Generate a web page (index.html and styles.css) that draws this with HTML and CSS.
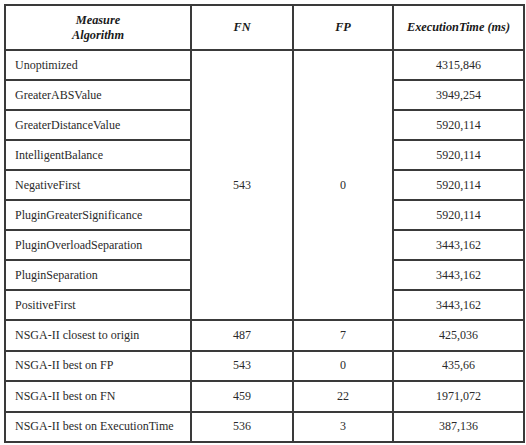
FILE: index.html
```html
<!DOCTYPE html>
<html lang="en">

<head>
    <meta charset="UTF-8">
    <meta name="viewport" content="width=device-width, initial-scale=1.0">
    <title>Results</title>
    <link rel="stylesheet" href="styles.css">
</head>

<body>
    <table class="results">
        <colgroup>
            <col class="col-algo">
            <col class="col-fn">
            <col class="col-fp">
            <col class="col-time">
        </colgroup>
        <thead>
            <tr>
                <th>Measure<br>Algorithm</th>
                <th>FN</th>
                <th>FP</th>
                <th>ExecutionTime (ms)</th>
            </tr>
        </thead>
        <tbody>
            <tr>
                <td class="name">Unoptimized</td>
                <td rowspan="9">543</td>
                <td rowspan="9">0</td>
                <td>4315,846</td>
            </tr>
            <tr>
                <td class="name">GreaterABSValue</td>
                <td>3949,254</td>
            </tr>
            <tr>
                <td class="name">GreaterDistanceValue</td>
                <td>5920,114</td>
            </tr>
            <tr>
                <td class="name">IntelligentBalance</td>
                <td>5920,114</td>
            </tr>
            <tr>
                <td class="name">NegativeFirst</td>
                <td>5920,114</td>
            </tr>
            <tr>
                <td class="name">PluginGreaterSignificance</td>
                <td>5920,114</td>
            </tr>
            <tr>
                <td class="name">PluginOverloadSeparation</td>
                <td>3443,162</td>
            </tr>
            <tr>
                <td class="name">PluginSeparation</td>
                <td>3443,162</td>
            </tr>
            <tr>
                <td class="name">PositiveFirst</td>
                <td>3443,162</td>
            </tr>
            <tr class="nsga">
                <td class="name">NSGA-II closest to origin</td>
                <td>487</td>
                <td>7</td>
                <td>425,036</td>
            </tr>
            <tr class="nsga">
                <td class="name">NSGA-II best on FP</td>
                <td>543</td>
                <td>0</td>
                <td>435,66</td>
            </tr>
            <tr class="nsga">
                <td class="name">NSGA-II best on FN</td>
                <td>459</td>
                <td>22</td>
                <td>1971,072</td>
            </tr>
            <tr class="nsga">
                <td class="name">NSGA-II best on ExecutionTime</td>
                <td>536</td>
                <td>3</td>
                <td>387,136</td>
            </tr>
        </tbody>
    </table>
</body>

</html>
```

FILE: styles.css
```css
* {
    margin: 0;
    padding: 0;
    box-sizing: border-box;
}

body {
    background: white;
    padding: 4px 0 0 4px;
    font-family: "Liberation Serif", "Times New Roman", Times, serif;
    color: #2a2a2a;
}

.results {
    width: 519px;
    border-collapse: collapse;
    table-layout: fixed;
    border: 2px solid #3a3a3a;
    font-size: 12px;
}

.col-algo {
    width: 186px;
}

.col-fn {
    width: 102px;
}

.col-fp {
    width: 100px;
}

.col-time {
    width: 131px;
}

.results th,
.results td {
    border: 2px solid #3a3a3a;
    text-align: center;
    vertical-align: middle;
}

.results th {
    height: 45px;
    font-style: italic;
    font-weight: bold;
    font-size: 12.3px;
    line-height: 15px;
    color: #1a1a1a;
}

.results td {
    height: 30px;
}

.results .nsga td {
    height: 30.5px;
}

.results td.name {
    text-align: left;
    padding-left: 9px;
}
```
